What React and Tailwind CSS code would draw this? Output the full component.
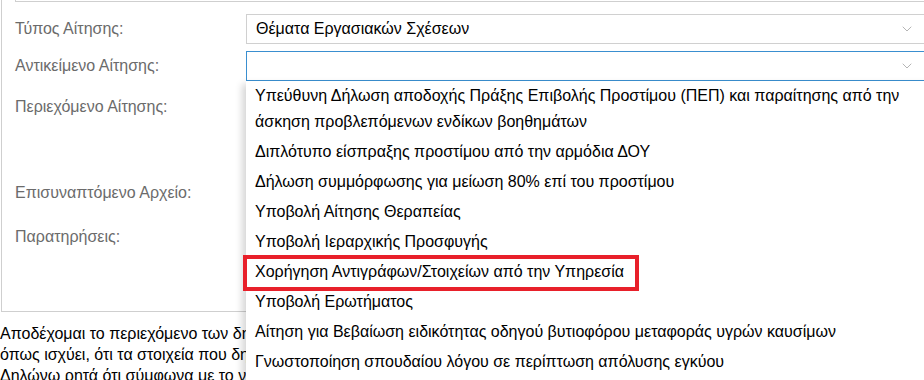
import { ChevronDown } from 'lucide-react'

const options = [
  'Υπεύθυνη Δήλωση αποδοχής Πράξης Επιβολής Προστίμου (ΠΕΠ) και παραίτησης από την άσκηση προβλεπόμενων ενδίκων βοηθημάτων',
  'Διπλότυπο είσπραξης προστίμου από την αρμόδια ΔΟΥ',
  'Δήλωση συμμόρφωσης για μείωση 80% επί του προστίμου',
  'Υποβολή Αίτησης Θεραπείας',
  'Υποβολή Ιεραρχικής Προσφυγής',
  'Χορήγηση Αντιγράφων/Στοιχείων από την Υπηρεσία',
  'Υποβολή Ερωτήματος',
  'Αίτηση για Βεβαίωση ειδικότητας οδηγού βυτιοφόρου μεταφοράς υγρών καυσίμων',
  'Γνωστοποίηση σπουδαίου λόγου σε περίπτωση απόλυσης εγκύου',
]

function Chevron() {
  return <ChevronDown className="size-[16px] text-[#b5b5b5] shrink-0" strokeWidth={1.5} />
}

export default function App() {
  return (
    <div className="w-[924px] h-[380px] overflow-hidden bg-white text-[16px] font-['Liberation_Sans',Arial,sans-serif]">
      <div className="relative w-[960px]">
        {/* form panel */}
        <div className="border-l border-b border-[#cfcfcf] h-[312px] ml-[1px]">
          <div className="ml-[13px] h-[2px] border-l border-b border-[#cfcfcf]" />

          <div className="flex items-center mt-[12px] h-[30px]">
            <div className="w-[244px] pl-[13px] text-[#6b6b6b]">Τύπος Αίτησης:</div>
            <div className="flex-1 h-[30px] border border-[#d0d0d0] flex items-center pl-[9px] pr-[44px] text-black">
              <span className="flex-1">Θέματα Εργασιακών Σχέσεων</span>
              <Chevron />
            </div>
          </div>

          <div className="flex items-center mt-[7px] h-[30px]">
            <div className="w-[244px] pl-[13px] text-[#6b6b6b]">Αντικείμενο Αίτησης:</div>
            <div className="flex-1 h-[30px] border border-[#3a8fd0] flex items-center pl-[9px] pr-[44px]">
              <span className="flex-1" />
              <Chevron />
            </div>
          </div>

          <div className="flex mt-[14px] h-[86px]">
            <div className="w-[244px] pl-[13px] text-[#6b6b6b]">Περιεχόμενο Αίτησης:</div>
          </div>

          <div className="flex h-[44px]">
            <div className="w-[244px] pl-[13px] text-[#6b6b6b]">Επισυναπτόμενο Αρχείο:</div>
          </div>

          <div className="flex">
            <div className="w-[244px] pl-[13px] text-[#6b6b6b]">Παρατηρήσεις:</div>
          </div>
        </div>

        <p className="mt-[11px] leading-[21px] text-black w-[940px]">
          Αποδέχομαι το περιεχόμενο των δηλώσεων και των όρων χρήσης της υπηρεσίας,
          <br />
          όπως ισχύει, ότι τα στοιχεία που δηλώνω είναι αληθή και ακριβή.
          <br />
          Δηλώνω ρητά ότι σύμφωνα με το νόμο αποδέχομαι την επεξεργασία των δεδομένων.
        </p>

        {/* open dropdown menu */}
        <div className="absolute left-[246px] top-[81px] w-[700px] pb-[20px] bg-white shadow-[-4px_3px_7px_rgba(0,0,0,0.16)] text-black">
          {options.map((o, i) => (
            <div key={i} className="relative px-[9px] py-[2px] leading-[26px]">
              {o}
              {i === 5 && (
                <div className="absolute left-[-3px] top-[-2px] w-[396px] h-[36px] border-[4px] border-[#e8202a]" />
              )}
            </div>
          ))}
        </div>
      </div>
    </div>
  )
}
